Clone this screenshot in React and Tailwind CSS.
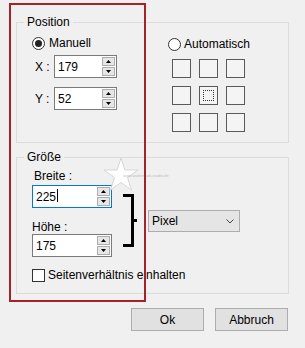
import React from 'react';

function Spin() {
  return (
    <div className="flex flex-col gap-[1px] pt-[1px] pr-[1px]">
      <div className="w-[13px] h-[9px] bg-[#e6e6e6] border border-[#adadad] flex items-center justify-center">
        <svg width="5" height="3" viewBox="0 0 5 3"><path d="M2.5 0L5 3H0Z" fill="#000" /></svg>
      </div>
      <div className="w-[13px] h-[9px] bg-[#e6e6e6] border border-[#adadad] flex items-center justify-center">
        <svg width="5" height="3" viewBox="0 0 5 3"><path d="M0 0H5L2.5 3Z" fill="#000" /></svg>
      </div>
    </div>
  );
}

function Radio({ checked }) {
  return (
    <span className="w-[13px] h-[13px] rounded-full border border-[#333] bg-white flex items-center justify-center shrink-0">
      {checked && <span className="w-[7px] h-[7px] rounded-full bg-[#222]" />}
    </span>
  );
}

export default function App() {
  const cells = [0, 1, 2, 3, 4, 5, 6, 7, 8];

  return (
    <div className="relative w-[305px] h-[348px] overflow-hidden bg-[#f0f0f0] text-black text-[12px] leading-[14px] font-['Liberation_Sans',Arial,sans-serif]">
      {/* Position */}
      <fieldset className="ml-[16px] mt-[15px] w-[273px] h-[128px] border border-[#dcdcdc]">
        <legend className="ml-[7px] px-[3px] leading-[14px]">Position</legend>
        <div className="flex pl-[15px] pt-[7px]">
          <div className="w-[136px]">
            <div className="flex items-center gap-[4px] h-[14px]">
              <Radio checked />
              <span>Manuell</span>
            </div>
            <div className="flex items-center mt-[5px]">
              <span className="w-[22px] pl-[3px]">X :</span>
              <div className="w-[63px] h-[23px] border border-[#7a7a7a] bg-white flex justify-between">
                <span className="pl-[3px] pt-[4px]">179</span>
                <Spin />
              </div>
            </div>
            <div className="flex items-center mt-[9px]">
              <span className="w-[22px] pl-[3px]">Y :</span>
              <div className="w-[63px] h-[23px] border border-[#7a7a7a] bg-white flex justify-between">
                <span className="pl-[3px] pt-[4px]">52</span>
                <Spin />
              </div>
            </div>
          </div>
          <div className="mt-[1px]">
            <div className="flex items-center gap-[3px] h-[14px]">
              <Radio />
              <span>Automatisch</span>
            </div>
            <div className="grid grid-cols-3 gap-[8px] ml-[4px] mt-[8px] w-[73px]">
              {cells.map(i => (
                <div key={i} className="w-[19px] h-[19px] border border-[#5a5a5a] bg-[#f4f4f4] p-[3px]">
                  {i === 4 && <div className="w-full h-full border border-dotted border-[#333]" />}
                </div>
              ))}
            </div>
          </div>
        </div>
      </fieldset>

      {/* Größe */}
      <fieldset className="ml-[16px] mt-[7px] w-[273px] h-[144px] border border-[#dcdcdc]">
        <legend className="ml-[7px] px-[3px] leading-[14px]">Größe</legend>
        <div className="pl-[15px] pt-[5px]">
          <div className="flex">
            <div className="w-[80px]">
              <div className="pl-[2px]">Breite :</div>
              <div className="mt-[2px] w-[80px] h-[23px] border border-[#0078d7] bg-white flex justify-between">
                <span className="pl-[3px] pt-[4px] flex items-start">
                  225<span className="w-[1px] h-[13px] bg-black ml-[1px] mt-[-1px]" />
                </span>
                <Spin />
              </div>
              <div className="mt-[12px]">Höhe :</div>
              <div className="w-[80px] h-[23px] border border-[#7a7a7a] bg-white flex justify-between">
                <span className="pl-[3px] pt-[4px]">175</span>
                <Spin />
              </div>
            </div>
            <svg className="ml-[11px] mt-[25px]" width="14" height="53" viewBox="0 0 14 53">
              <rect x="0" y="0" width="11" height="3" fill="#000" />
              <rect x="8" y="0" width="3" height="53" fill="#000" />
              <rect x="0" y="50" width="11" height="3" fill="#000" />
              <rect x="11" y="25" width="3" height="3" fill="#000" />
            </svg>
            <div className="ml-[11px] mt-[41px] w-[92px] h-[22px] bg-[#e5e5e5] border border-[#adadad] flex items-center justify-between pl-[3px] pr-[5px]">
              <span>Pixel</span>
              <svg width="8" height="5" viewBox="0 0 8 5">
                <path d="M0.5 0.5L4 4L7.5 0.5" fill="none" stroke="#444" strokeWidth="1" />
              </svg>
            </div>
          </div>
          <div className="flex items-center gap-[3px] mt-[11px]">
            <span className="w-[13px] h-[13px] border border-[#333] bg-white shrink-0" />
            <span>Seitenverhältnis einhalten</span>
          </div>
        </div>
      </fieldset>

      {/* buttons */}
      <div className="flex justify-end gap-[11px] pr-[17px] mt-[14px]">
        <button className="w-[73px] h-[23px] bg-[#e1e1e1] border border-[#adadad]">Ok</button>
        <button className="w-[73px] h-[23px] bg-[#e1e1e1] border border-[#adadad]">Abbruch</button>
      </div>

      {/* watermark */}
      <div className="absolute left-[103px] top-[157px] flex items-center pointer-events-none">
        <svg width="36" height="34" viewBox="0 0 36 34">
          <path d="M18 1L22 13L35 13L24.5 20.5L28.5 33L18 25.5L7.5 33L11.5 20.5L1 13L14 13Z" fill="#ffffff" stroke="#d6d6d6" strokeWidth="1" />
        </svg>
        <span className="text-[4px] leading-[4px] text-[#bdbdbd] -ml-[16px] mt-[4px]">www.watermark-studio.de</span>
      </div>

      {/* red highlight */}
      <div className="absolute left-[9px] top-[3px] w-[137px] h-[299px] border-2 border-[#a3232a] pointer-events-none" />
    </div>
  );
}
